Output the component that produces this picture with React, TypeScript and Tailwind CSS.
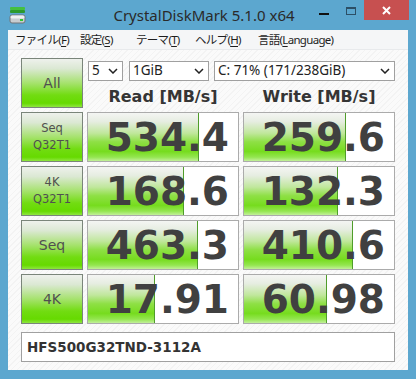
import React from "react";

const rows = [
  { label: ["Seq", "Q32T1"], read: "534.4", rf: 111, write: "259.6", wf: 102 },
  { label: ["4K", "Q32T1"], read: "168.6", rf: 96, write: "132.3", wf: 94 },
  { label: ["Seq"], read: "463.3", rf: 110, write: "410.6", wf: 109 },
  { label: ["4K"], read: "17.91", rf: 67, write: "60.98", wf: 83 },
];

const menus = [
  { pre: "ファイル(", key: "F", post: ")", w: "w-[65px]" },
  { pre: "設定(", key: "S", post: ")", w: "w-[56px]" },
  { pre: "テーマ(", key: "T", post: ")", w: "w-[59px]" },
  { pre: "ヘルプ(", key: "H", post: ")", w: "w-[63px]" },
  { pre: "言語(", key: "L", post: "anguage)", w: "w-auto" },
];

function Chevron() {
  return (
    <svg width="10" height="6" viewBox="0 0 10 6" className="shrink-0">
      <polyline points="1,1 5,5 9,1" fill="none" stroke="#222" strokeWidth="1.5" />
    </svg>
  );
}

function Combo({ text, w }: { text: string; w: string }) {
  return (
    <div className={`${w} h-[20px] border border-[#a0a0a0] bg-white flex items-center justify-between pl-[3px] pr-[4px] text-[13.5px] text-[#222] leading-none`}>
      <span>{text}</span>
      <Chevron />
    </div>
  );
}

function TestButton({ lines, big }: { lines: string[]; big?: boolean }) {
  return (
    <div className="h-[50px] w-[62px] border border-[#7a857a] bg-[linear-gradient(to_bottom,#eef1ec_0%,#dbe8d3_20%,#a6e26e_50%,#72dc12_75%,#66da00_92%,#8fe640_100%)] flex flex-col items-center justify-center text-[#505050] font-['DejaVu_Sans',sans-serif]">
      {lines.map((l) => (
        <div key={l} className={big ? "text-[14px] leading-[16px]" : "text-[11.5px] leading-[17px]"}>
          {l}
        </div>
      ))}
    </div>
  );
}

function Cell({ value, fill }: { value: string; fill: number }) {
  return (
    <div className="relative h-[50px] w-[152px] border border-[#ababab] bg-white overflow-hidden">
      <div
        className="absolute left-0 top-0 bottom-0 border-r border-[#4f9d2a] bg-[linear-gradient(to_bottom,#f4f5f3_0%,#e6ede1_18%,#c0e79c_42%,#8ee045_60%,#76dc1e_80%,#94e650_92%,#c2f09a_100%)]"
        style={{ width: fill }}
      />
      <div className="relative flex h-full items-center justify-end pr-[9px] font-['DejaVu_Sans',sans-serif] font-bold text-[39px] text-[#404040] leading-none">
        {value}
      </div>
    </div>
  );
}

export default function App() {
  return (
    <div className="w-[416px] h-[379px] bg-[#5ca7cf] flex flex-col font-['Noto_Sans','Noto_Sans_CJK_JP',sans-serif] overflow-hidden">
      {/* title bar */}
      <div className="h-[30px] flex items-start relative">
        <svg width="18" height="18" viewBox="0 0 18 18" className="ml-[9px] mt-[6px]">
          <rect x="1" y="1" width="15" height="3" rx="1" fill="#44c040" />
          <rect x="1" y="4" width="15" height="3" rx="1" fill="#2c9a2c" />
          <rect x="1" y="9" width="15" height="8" rx="2" fill="#c8ccd0" stroke="#707478" strokeWidth="1" />
          <rect x="1.5" y="9.5" width="14" height="3" rx="1.5" fill="#eef0f2" />
          <rect x="11" y="13" width="3" height="2" fill="#2ec82e" />
        </svg>
        <div className="flex-1 text-center text-[15px] text-[#2a2a2a] mt-[4px] ml-[62px]">CrystalDiskMark 5.1.0 x64</div>
        <div className="flex items-start">
          <div className="w-[10px] h-[2px] bg-[#111] mt-[13px] mr-[17px]" />
          <div className="w-[10px] h-[8px] border border-[#2c4f66] border-t-2 mt-[7px] mr-[8px]" />
          <div className="w-[45px] h-[20px] bg-[#c75050] flex items-center justify-center mr-[7px]">
            <svg width="9" height="9" viewBox="0 0 9 9">
              <path d="M1 1 L8 8 M8 1 L1 8" stroke="#fff" strokeWidth="2" />
            </svg>
          </div>
        </div>
      </div>

      {/* client */}
      <div className="mx-[8px] h-[340px] flex flex-col bg-white">
        <div className="h-[20px] bg-[#f5f6f7] flex items-center pl-[7px] text-[11.5px] tracking-[-0.7px] text-[#1e1e1e] border-b border-[#e8eaec]">
          {menus.map((m) => (
            <div key={m.key} className={`${m.w} shrink-0 whitespace-nowrap`}>
              {m.pre}
              <span className="underline underline-offset-2">{m.key}</span>
              {m.post}
            </div>
          ))}
        </div>
        <div className="flex-1 px-[13px] pt-[8px] bg-[repeating-linear-gradient(135deg,#f3f3f3_0px,#f3f3f3_1px,#fafafa_1px,#fafafa_4px)] flex flex-col">
          <div className="flex gap-[4px] h-[50px]">
            <TestButton lines={["All"]} big />
            <div className="flex flex-col">
              <div className="flex mt-[3px] ml-[1px]">
                <Combo text="5" w="w-[35px]" />
                <div className="w-[6px]" />
                <Combo text="1GiB" w="w-[80px]" />
                <div className="w-[5px]" />
                <Combo text="C: 71% (171/238GiB)" w="w-[181px]" />
              </div>
              <div className="flex gap-[4px] mt-[6px] font-['DejaVu_Sans',sans-serif] font-bold text-[16px] text-[#353535] leading-[20px]">
                <div className="w-[152px] text-center">Read [MB/s]</div>
                <div className="w-[152px] text-center">Write [MB/s]</div>
              </div>
            </div>
          </div>
          {rows.map((r) => (
            <div key={r.read} className="flex gap-[4px] mt-[4px]">
              <TestButton lines={r.label} big={r.label.length === 1} />
              <Cell value={r.read} fill={r.rf} />
              <Cell value={r.write} fill={r.wf} />
            </div>
          ))}
          <div className="mt-[8px] h-[30px] border border-[#a0a0a0] bg-white flex items-center pl-[5px] font-['DejaVu_Sans',sans-serif] font-bold text-[13.5px] text-[#333]">
            HFS500G32TND-3112A
          </div>
        </div>
      </div>
    </div>
  );
}
